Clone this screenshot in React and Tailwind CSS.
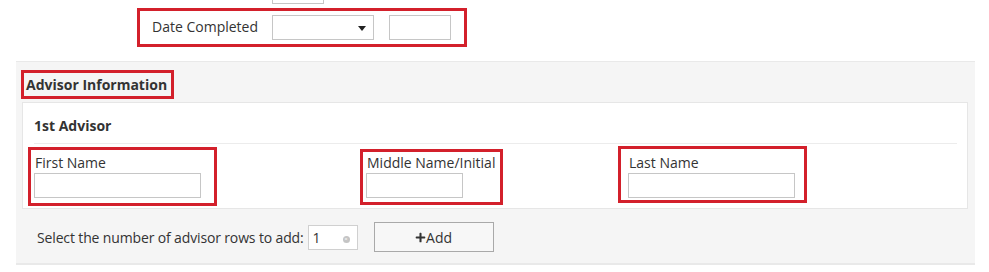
import { FaPlus } from "react-icons/fa";

function RedBox({ className, children }) {
  return (
    <div className={`border-[3px] border-[#d3202b] ${className}`}>{children}</div>
  );
}

function TextInput({ className }) {
  return (
    <input
      type="text"
      className={`h-[25px] border border-[#c6c6c6] bg-white outline-none ${className}`}
    />
  );
}

function NameField({ label, boxClass, labelClass = "pt-[3px]", inputClass }) {
  return (
    <RedBox className={`flex flex-col pl-[3px] ${boxClass}`}>
      <label className={`leading-[20px] pl-[1px] ${labelClass}`}>{label}</label>
      <TextInput className={inputClass} />
    </RedBox>
  );
}

export default function App() {
  return (
    <div
      className="w-[989px] h-[272px] bg-white text-[14px] text-[#333] overflow-hidden"
      style={{ fontFamily: '"Open Sans", "Liberation Sans", sans-serif' }}
    >
      {/* cut-off field above */}
      <div className="h-[4px] flex">
        <div className="ml-[272px] w-[52px] h-[4px] border-x border-b border-[#c6c6c6]" />
      </div>

      {/* date completed */}
      <RedBox className="mt-[4px] ml-[137px] w-[330px] h-[39px] flex items-center pl-[12px] pb-[1px]">
        <span className="w-[120px] -mt-[2px]">Date Completed</span>
        <div className="relative w-[102px] h-[25px] border border-[#c6c6c6] bg-white">
          <span className="absolute right-[7px] top-[10px] w-0 h-0 border-x-[4px] border-x-transparent border-t-[5px] border-t-[#222]" />
        </div>
        <TextInput className="ml-[15px] w-[62px]" />
      </RedBox>

      {/* advisor panel */}
      <div className="mt-[14px] ml-[16px] w-[959px] h-[204px] bg-[#f5f5f5] border-t border-b-2 border-[#e9e9e9] flex flex-col">
        <RedBox className="mt-[8px] ml-[5px] w-[153px] h-[29px] flex items-center pl-[2px]">
          <span className="font-bold">Advisor Information</span>
        </RedBox>

        <div className="mt-[3px] ml-[6px] mr-[7px] h-[107px] bg-white border border-[#e6e6e6]">
          <div className="h-[41px] ml-[11px] mr-[10px] pt-[12px] font-bold border-b border-[#ececec]">
            1st Advisor
          </div>
          <div className="flex items-start">
            <NameField
              label="First Name"
              boxClass="mt-[3px] ml-[5px] w-[189px] h-[59px]"
              inputClass="w-[167px]"
            />
            <NameField
              label="Middle Name/Initial"
              boxClass="mt-[5px] ml-[143px] w-[143px] h-[56px]"
              labelClass="pt-[1px]"
              inputClass="w-[97px]"
            />
            <NameField
              label="Last Name"
              boxClass="mt-[2px] ml-[115px] w-[189px] h-[57px] pl-[7px]"
              labelClass="pt-[4px]"
              inputClass="w-[167px]"
            />
          </div>
        </div>

        <div className="mt-[13px] ml-[21px] flex items-center">
          <span className="tracking-[-0.14px]">Select the number of advisor rows to add:</span>
          <div className="ml-[4px] relative w-[50px] h-[25px] border border-[#d0d0d0] bg-white flex items-center pl-[4px]">
            <span>1</span>
            <span className="absolute right-[7px] top-[10px] w-[7px] h-[7px] rounded-full bg-[#c4c4c4] text-white text-[6px] leading-[7px] text-center">
              ×
            </span>
          </div>
          <button className="ml-[16px] w-[120px] h-[30px] border border-[#a9a9a9] bg-[#f7f7f7] flex items-center justify-center text-[#333]">
            <FaPlus className="w-[11px] h-[11px] text-[#333]" />
            <span>Add</span>
          </button>
        </div>
      </div>
    </div>
  );
}
